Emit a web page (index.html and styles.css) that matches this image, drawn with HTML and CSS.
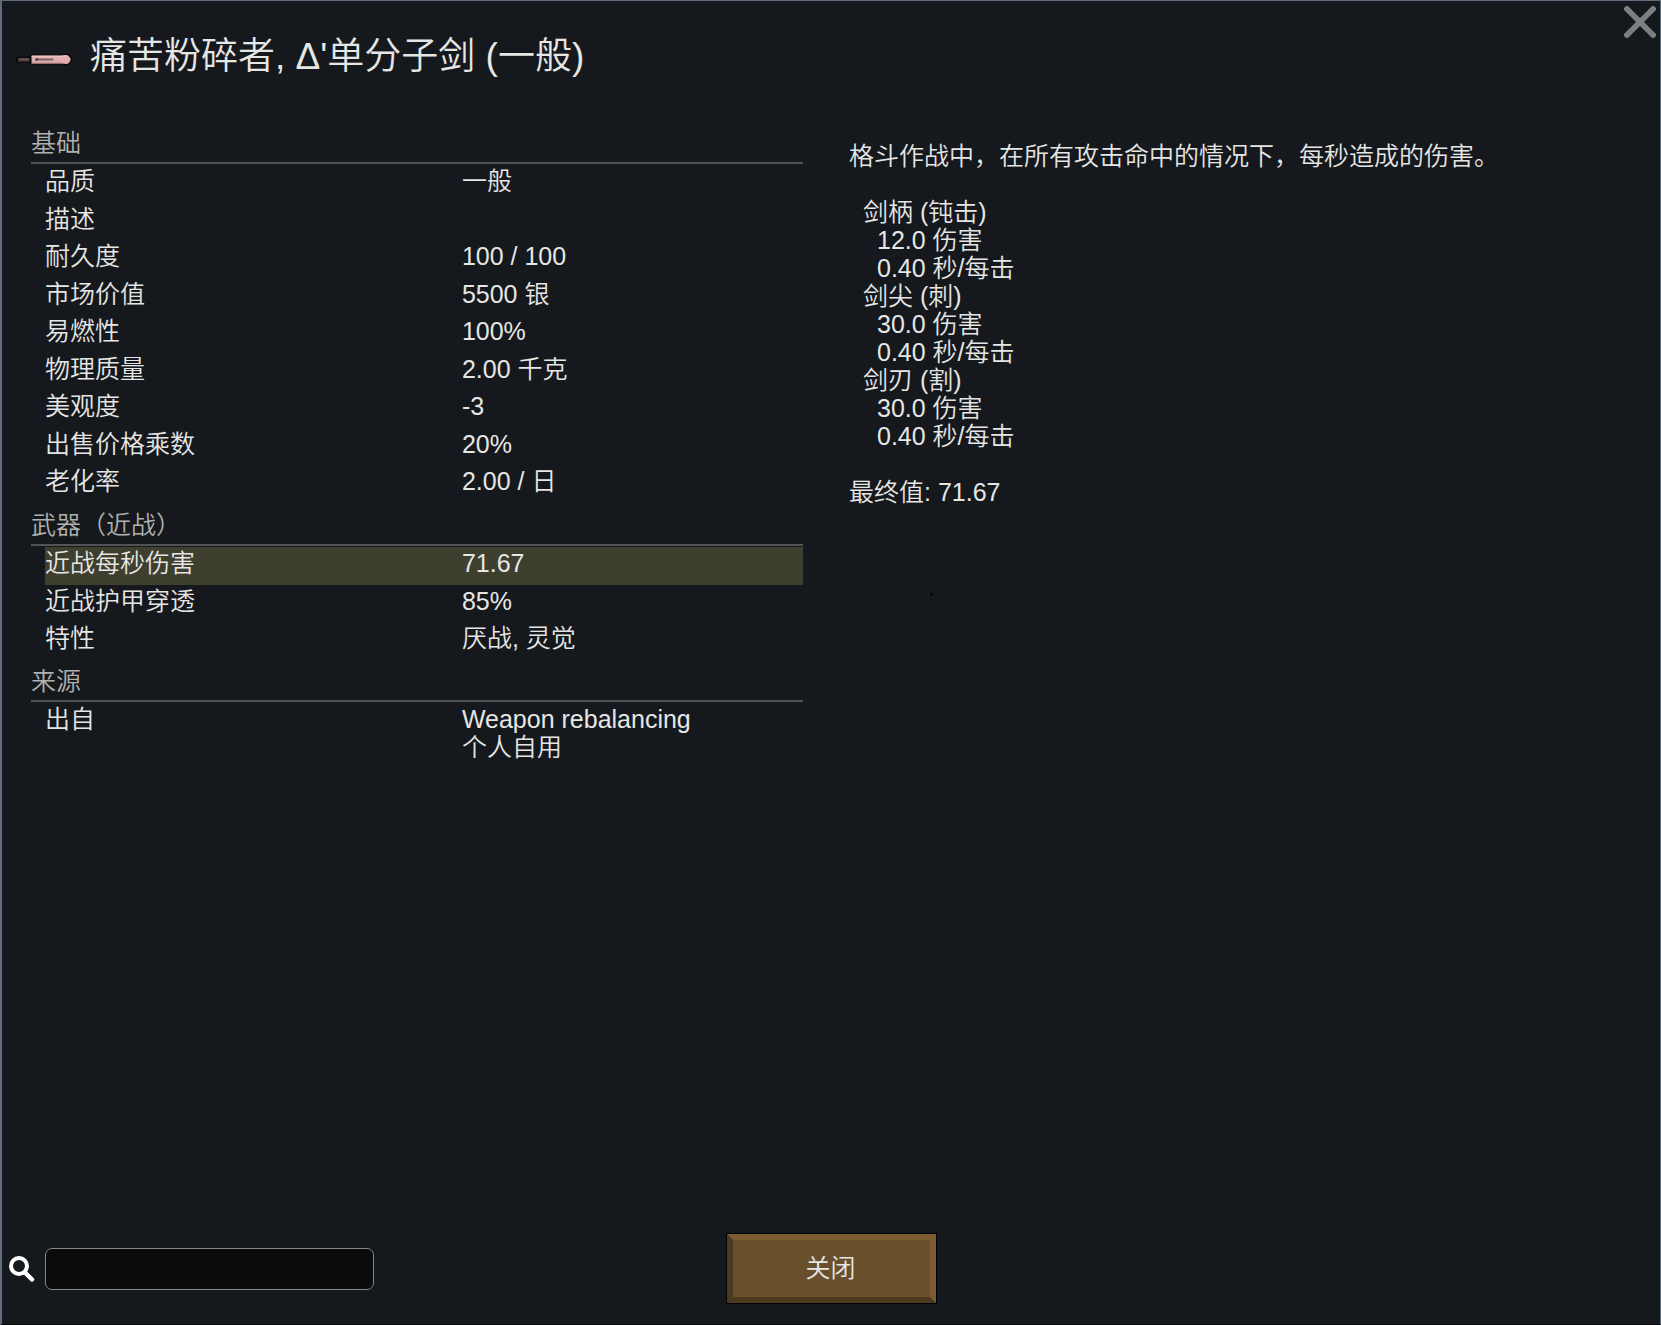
FILE: index.html
```html
<!DOCTYPE html>
<html lang="zh-CN">
<head>
<meta charset="utf-8">
<meta name="viewport" content="width=device-width, initial-scale=1">
<title>痛苦粉碎者</title>
<link rel="stylesheet" href="styles.css">
</head>
<body>
<main class="window">
  <button class="dismiss" type="button" aria-label="关闭窗口">
    <svg viewBox="0 0 32 32" width="32" height="32" aria-hidden="true"><path d="M3 3 29 29M29 3 3 29" stroke="#7b7f82" stroke-width="5.6" stroke-linecap="square" fill="none"/></svg>
  </button>
  <header class="title-bar">
    <svg class="item-icon" viewBox="2 0 56 16" width="58" height="16" preserveAspectRatio="none" aria-hidden="true">
      <path d="M3 4.5H14L16 2Q17 1 20 2.500H46L51 1.500Q55 2 57 7.500Q55 13 51 13.500L46 12.500H19Q16 13.500 15 11L13 10.500H3Q0 8 3 4.500Z" fill="#08090b"/>
      <path d="M4 6H15V9.500H4Z" fill="#5a4444"/>
      <path d="M6 7H13" stroke="#755a59" stroke-width="1"/>
      <path d="M17 3.500H46L51 3Q53.500 3.500 55 7.500Q53.500 11.500 51 12L46 11.500H17Z" fill="#e2abac"/>
      <path d="M17 4.500H46L51 4" stroke="#edc0bd" stroke-width="1.500" fill="none"/>
      <path d="M17 11H46" stroke="#b08688" stroke-width="1"/>
      <path d="M22 7.500H38" stroke="#77616b" stroke-width="2"/>
      <circle cx="22" cy="7.500" r="1.500" fill="#4b4a59"/>
    </svg>
    <h1 class="title">痛苦粉碎者, Δ'单分子剑 (一般)</h1>
  </header>
  <div class="content">
    <div class="stats">
      <section>
        <h2 class="group-title">基础</h2>
        <table class="stat-table">
          <tr><th scope="row">品质</th><td>一般</td></tr>
          <tr><th scope="row">描述</th><td></td></tr>
          <tr><th scope="row">耐久度</th><td>100 / 100</td></tr>
          <tr><th scope="row">市场价值</th><td>5500 银</td></tr>
          <tr><th scope="row">易燃性</th><td>100%</td></tr>
          <tr><th scope="row">物理质量</th><td>2.00 千克</td></tr>
          <tr><th scope="row">美观度</th><td>-3</td></tr>
          <tr><th scope="row">出售价格乘数</th><td>20%</td></tr>
          <tr><th scope="row">老化率</th><td>2.00 / 日</td></tr>
        </table>
      </section>
      <section>
        <h2 class="group-title">武器（近战）</h2>
        <table class="stat-table">
          <tr class="selected"><th scope="row">近战每秒伤害</th><td>71.67</td></tr>
          <tr><th scope="row">近战护甲穿透</th><td>85%</td></tr>
          <tr><th scope="row">特性</th><td>厌战, 灵觉</td></tr>
        </table>
      </section>
      <section>
        <h2 class="group-title">来源</h2>
        <table class="stat-table">
          <tr><th scope="row">出自</th><td>Weapon rebalancing<br>个人自用</td></tr>
        </table>
      </section>
    </div>
    <section class="details">
      <p class="summary">格斗作战中，在所有攻击命中的情况下，每秒造成的伤害。</p>
      <dl class="attacks">
        <dt>剑柄 (钝击)</dt>
        <dd>12.0 伤害</dd>
        <dd>0.40 秒/每击</dd>
        <dt>剑尖 (刺)</dt>
        <dd>30.0 伤害</dd>
        <dd>0.40 秒/每击</dd>
        <dt>剑刃 (割)</dt>
        <dd>30.0 伤害</dd>
        <dd>0.40 秒/每击</dd>
      </dl>
      <p>最终值: 71.67</p>
    </section>
  </div>
  <svg class="pointer" viewBox="0 0 3 3" width="3" height="3" aria-hidden="true"><path d="M1 0H2V1H3V2H2V3H1V2H0V1H1Z" fill="#000"/></svg>
  <footer class="footer">
    <div class="search">
      <label class="search-label" for="search" aria-label="搜索">
        <svg viewBox="0 0 26 26" width="26" height="26" aria-hidden="true"><circle cx="10" cy="10" r="8" fill="none" stroke="#fff" stroke-width="4"/><path d="M16 16.500 23 23.500" stroke="#fff" stroke-width="4.500" stroke-linecap="round"/></svg>
      </label>
      <input class="search-box" id="search" type="text">
    </div>
    <button class="close" type="button">关闭</button>
  </footer>
</main>
</body>
</html>
```
FILE: styles.css
```css
*,
*::before,
*::after {
  box-sizing: border-box;
}

body {
  margin: 0;
  background: #15191d;
  color: #e6e6e4;
  font: 350 25px/28px "Liberation Sans", "Noto Sans CJK SC", sans-serif;
}

h1,
h2,
p,
dl,
dd {
  margin: 0;
  font-weight: inherit;
}

button,
input {
  font: inherit;
  color: inherit;
}

.window {
  position: relative;
  display: flex;
  flex-direction: column;
  min-height: 100vh;
  border: 1px solid #5f6c7c;
  border-left-width: 2px;
  border-bottom-color: #08090b;
}

.dismiss {
  position: absolute;
  top: 5px;
  right: 4px;
  padding: 0;
  border: 0;
  background: none;
  cursor: pointer;
}

.dismiss svg {
  display: block;
}

.title-bar {
  display: flex;
  align-items: center;
  gap: 16px;
  padding: 32px 64px 0 14px;
}

.item-icon {
  flex: none;
  margin-top: 6px;
}

.title {
  font-size: 37px;
  line-height: 48px;
}

.content {
  flex: 1;
  display: grid;
  grid-template-columns: 772fr 765fr;
  gap: 46px;
  padding: 41px 46px 0 29px;
}

.stats section:first-child {
  margin-bottom: 1px;
}

.group-title {
  height: 42px;
  padding-top: 7px;
  margin-bottom: 1px;
  border-bottom: 2px solid #515253;
  color: #b0b0ae;
  font-size: 25px;
}

.stat-table {
  width: calc(100% - 14px);
  margin-left: 14px;
  border-collapse: collapse;
  table-layout: fixed;
}

.stat-table tr {
  height: 38px;
}

.stat-table tr:nth-child(even) {
  height: 37px;
}

.stat-table th,
.stat-table td {
  padding: 2px 0 0;
  font-weight: inherit;
  text-align: left;
  vertical-align: top;
}

.stat-table th {
  width: 55%;
}

.selected {
  background: #3f3f30;
}

.details {
  padding-top: 20px;
}

.attacks {
  padding: 28px 0 28px 14px;
}

.attacks dd {
  padding-left: 14px;
}

.pointer {
  position: absolute;
  top: 592px;
  left: 56%;
}

.footer {
  display: grid;
  grid-template-columns: 1fr auto 1fr;
  align-items: center;
  padding: 0 6px 20px 7px;
}

.search {
  display: flex;
  align-items: center;
  gap: 10px;
}

.search-label svg {
  display: block;
}

.search-box {
  width: 329px;
  height: 42px;
  padding: 0 8px;
  border: 1px solid #858687;
  border-radius: 7px;
  background: #0a0b0d;
}

.close {
  width: 211px;
  height: 71px;
  padding: 0 2px 2px 0;
  border: 7px solid;
  border-color: #7b5d31 #7b5d31 #4b3a20 #4b3a20;
  outline: 1px solid #000;
  outline-offset: -1px;
  background: #69502d;
  cursor: pointer;
}
```
